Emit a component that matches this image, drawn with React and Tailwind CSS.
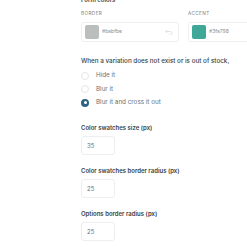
import React, { useState } from 'react';

const Radio = ({ label, checked, onClick }) => (
  <label onClick={onClick} className="flex items-center h-[13.5px] cursor-pointer">
    {checked ? (
      <span className="w-[8px] h-[8px] rounded-full bg-[#2c6285] flex items-center justify-center">
        <span className="w-[3px] h-[3px] rounded-full bg-white" />
      </span>
    ) : (
      <span className="w-[8px] h-[8px] rounded-full border border-[#e3e6e8] bg-white" />
    )}
    <span className="ml-[7px] text-[6.3px] text-[#6b7075]">{label}</span>
  </label>
);

const NumberField = ({ label, value }) => (
  <div>
    <div className="text-[6px] font-semibold text-[#3a3f44] leading-[8px]">{label}</div>
    <div className="mt-[4px] w-[34px] h-[19px] border border-[#eceef0] rounded-[3px] flex items-center pl-[5px] text-[6px] text-[#6b7075]">
      {value}
    </div>
  </div>
);

const ColorField = ({ title, color, hex, undo }) => (
  <div className="w-[98px] shrink-0">
    <div className="text-[4.7px] tracking-[0.4px] text-[#7a7f84] leading-[6px]">{title}</div>
    <div className="mt-[6px] h-[20px] border border-[#eceef0] rounded-[3px] flex items-center pl-[3px] pr-[5px]">
      <span className="w-[14px] h-[14px] rounded-[2px]" style={{ backgroundColor: color }} />
      <span className="ml-[3px] text-[5px] text-[#8a8f94]">{hex}</span>
      {undo && (
        <svg className="ml-auto" width="8" height="6" viewBox="0 0 16 12" fill="none" stroke="#d8dbde" strokeWidth="1.6">
          <path d="M4 2 L1 5 L4 8" />
          <path d="M1 5 H10 a4 3.5 0 0 1 0 7 H7" />
        </svg>
      )}
    </div>
  </div>
);

export default function App() {
  const [choice, setChoice] = useState(2);
  const options = ['Hide it', 'Blur it', 'Blur it and cross it out'];

  return (
    <div className="w-[247px] h-[247px] overflow-hidden bg-white" style={{ fontFamily: 'Inter, "Noto Sans", sans-serif' }}>
      <div className="pl-[81px] mt-[-4px]">
        <div className="text-[6px] font-semibold text-[#3a3f44] leading-[8px]">Form colors</div>
        <div className="mt-[6px] flex gap-[9px]">
          <ColorField title="BORDER" color="#babfbe" hex="#babfbe" undo />
          <ColorField title="ACCENT" color="#3fa798" hex="#3fa798" />
        </div>
        <div className="mt-[15px] text-[6.3px] font-medium text-[#3a3f44] leading-[8px] whitespace-nowrap">
          When a variation does not exist or is out of stock,
        </div>
        <div className="mt-[4px]">
          {options.map((o, i) => (
            <Radio key={o} label={o} checked={choice === i} onClick={() => setChoice(i)} />
          ))}
        </div>
        <div className="mt-[14px] flex flex-col gap-[12px]">
          <NumberField label="Color swatches size (px)" value="35" />
          <NumberField label="Color swatches border radius (px)" value="25" />
          <NumberField label="Options border radius (px)" value="25" />
        </div>
      </div>
    </div>
  );
}
